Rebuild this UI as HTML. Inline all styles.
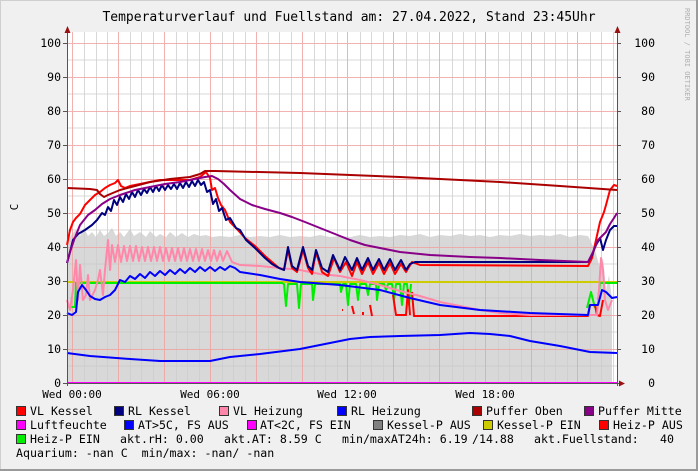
<!DOCTYPE html>
<html><head><meta charset="utf-8"><style>
body{margin:0;width:698px;height:471px;overflow:hidden;background:#f0f0f0;}
svg{display:block}
text{font-family:"DejaVu Sans Mono","Liberation Mono",monospace;white-space:pre;}
</style></head><body>
<svg width="698" height="471" viewBox="0 0 698 471" xmlns="http://www.w3.org/2000/svg">
<rect x="0" y="0" width="698" height="471" fill="#f0f0f0"/>
<rect x="0.5" y="0.5" width="696" height="469" fill="none" stroke="#cfcfcf"/>
<line x1="0" y1="470" x2="698" y2="470" stroke="#9a9a9a" stroke-width="2"/>
<line x1="697" y1="0" x2="697" y2="471" stroke="#9a9a9a" stroke-width="2"/>
<rect x="67" y="32" width="550" height="351" fill="#fff"/>
<path d="M67,383 L67,240 72,234 76,230 80,236 84,228 88,236 92,232 96,237 100,230 104,236 108,233 112,228 116,236 120,232 124,237 130,229 134,236 140,232 146,237 150,231 156,237 160,234 166,237 170,232 176,237 182,233 188,237 194,234 200,236 206,235 212,237 220,236 230,237 240,235 250,237 260,236 270,237 280,235 290,237 300,236 310,237 320,235 330,237 340,236 350,237 360,235 370,237 380,236 390,237 400,235 410,236 420,234 430,237 440,235 450,236 460,234 470,236 480,235 490,237 500,235 510,236 520,234 530,236 540,235 550,236 560,234 570,237 580,235 588,236 595,250 600,268 603,258 606,290 609,275 612,300 612,383 Z" fill="#d8d8d8"/>
<g stroke="#c8c8c8" stroke-width="1">
<path d="M67.5,366 H617 M67.5,332 H617 M67.5,298 H617 M67.5,264 H617 M67.5,230 H617 M67.5,196 H617 M67.5,162 H617 M67.5,128 H617 M67.5,94 H617 M67.5,60 H617" opacity="0.7"/>
</g>
<path stroke="#cccccc" stroke-width="1" opacity="0.75" d="M84.5,32V383M96.5,32V383M107.5,32V383M130.5,32V383M141.5,32V383M153.5,32V383M176.5,32V383M187.5,32V383M199.5,32V383M222.5,32V383M233.5,32V383M245.5,32V383M268.5,32V383M279.5,32V383M291.5,32V383M314.5,32V383M325.5,32V383M337.5,32V383M360.5,32V383M371.5,32V383M383.5,32V383M406.5,32V383M417.5,32V383M429.5,32V383M452.5,32V383M463.5,32V383M475.5,32V383M498.5,32V383M509.5,32V383M521.5,32V383M544.5,32V383M555.5,32V383M567.5,32V383M590.5,32V383M601.5,32V383M613.5,32V383"/>
<path stroke="#f0a0a0" stroke-width="1" opacity="0.8" d="M72.5,32V383M118.5,32V383M164.5,32V383M210.5,32V383M256.5,32V383M302.5,32V383M347.5,32V383M393.5,32V383M439.5,32V383M485.5,32V383M531.5,32V383M577.5,32V383 M67,349.5H617M67,315.5H617M67,281.5H617M67,247.5H617M67,213.5H617M67,179.5H617M67,145.5H617M67,111.5H617M67,77.5H617M67,43.5H617"/>
<g fill="none" stroke-width="2" stroke-linejoin="round">
<path stroke="#0000ff" d="M67,353 L90,356 130,359 160,361 190,361 210,361 230,357 260,354 300,349 320,345 350,339 370,337 400,336 440,335 470,333 490,334 510,336 530,341 560,346 590,352 617,353"/>
<path stroke="#cccc00" d="M67,282 L617,282"/>
<path stroke="#00ee00" d="M67,307 L75,307 76,283 282,283 284,284 286,306 288,284 297,284 299,308 301,284 312,284 313,300 315,284 340,284 341,292 343,284 346,284 348,305 350,284 356,284 358,300 360,284 366,284 368,295 370,284 376,284 377,300 379,284 384,284 386,290 388,284 392,284 394,300 396,284 400,284 402,305 404,284 407,284 409,305 411,284 M587,308 L589,300 591,292 593,300 595,308 M598,300 L600,283 617,283"/>
<path stroke="#ff0000" d="M342,310 L343,310 M352,306 L354,314 M363,312 L363,315 M370,305 L372,316 M393,295 L396,315 406,315 408,290 410,315 M412,292 L414,316 588,316 590,305 595,305 597,315 600,316 603,300"/>
<path stroke="#ff88aa" d="M67,300 L70,310 73,290 76,260 78,300 80,265 83,300 86,295 88,275 90,300 95,290 98,280 100,270 103,295 105,270 108,240 110,270 112,245 115,262 118,245 121,262 124,246 127,261 130,246 133,261 136,246 139,261 142,247 145,261 148,247 151,261 154,247 157,261 160,247 163,261 166,248 169,261 172,248 175,261 178,248 181,261 184,248 187,261 190,249 193,261 196,249 199,261 202,249 205,261 208,250 211,261 214,250 217,261 220,251 223,261 227,251 232,262 240,265 260,266 280,268 300,270 320,274 340,276 360,280 380,285 400,291 420,296 440,302 460,306 480,310 500,313 530,315 597,315 599,290 601,258 603,270 605,300 608,310 612,300"/>
<path stroke="#0000ff" d="M67,313 L72,315 76,312 78,292 82,285 86,290 90,296 95,299 100,300 105,297 110,295 115,290 120,280 125,282 130,276 135,279 140,274 145,278 150,272 155,276 160,271 165,275 170,270 175,274 180,269 185,273 190,268 195,272 200,267 205,271 210,267 215,271 220,267 225,270 230,266 235,268 240,272 260,275 280,279 300,282 340,285 380,290 410,298 440,305 480,310 530,313 588,315 590,305 598,305 602,290 606,292 612,298 617,297"/>
<path stroke="#ff0000" d="M67,245 L70,230 73,222 76,218 80,214 85,205 90,200 95,195 100,192 105,188 110,185 115,183 118,180 121,186 125,188 130,186 140,184 150,182 160,180 175,180 190,180 200,177 206,172 210,178 212,190 215,188 218,198 221,205 225,210 230,222 236,228 245,238 255,246 265,256 272,262 279,268 284,270 288,250 292,268 297,272 303,250 308,268 312,274 316,252 322,272 328,276 334,258 340,272 346,262 352,276 357,262 362,274 368,262 373,274 379,263 384,274 390,263 395,274 401,264 406,272 412,262 420,265 588,266 592,258 596,240 600,222 604,212 606,205 610,190 614,185 617,186"/>
<path stroke="#000080" d="M67,263 L70,252 73,240 78,234 85,230 92,225 97,220 102,213 105,215 108,207 111,211 114,200 117,205 120,197 123,202 126,194 129,199 132,192 135,197 138,190 141,195 144,189 147,193 150,187 153,192 156,186 159,191 162,185 165,190 168,185 171,189 174,184 177,189 180,183 183,188 186,182 189,187 192,181 195,186 198,180 201,185 204,182 207,192 210,190 213,204 216,199 219,211 222,208 226,220 230,218 236,228 240,230 246,240 255,248 265,258 272,264 279,268 284,270 288,247 292,266 297,270 303,247 308,266 312,270 316,250 322,268 328,272 333,255 340,270 345,257 352,270 357,258 362,270 368,258 373,270 379,259 384,270 390,259 395,270 401,260 406,270 410,264 415,262 588,262 592,255 596,245 600,238 603,250 606,240 610,230 614,226 617,226"/>
<path stroke="#880088" d="M67,263 L70,252 74,240 80,225 88,215 95,210 102,204 110,199 120,195 135,190 150,187 165,184 180,182 195,179 205,177 212,176 218,179 224,184 230,190 240,199 252,205 265,209 280,213 292,217 305,222 320,228 335,234 350,240 365,245 380,248 400,252 430,255 470,257 500,258 540,260 588,262 593,252 598,240 602,236 606,232 610,224 614,218 617,213"/>
<path stroke="#aa0000" d="M67,188 L90,189 97,190 100,194 104,197 108,195 120,190 135,186 150,182 170,179 190,177 200,174 205,171 215,171 300,173 400,177 500,182 560,186 617,190"/>
<path stroke="#ff00ff" d="M67,383 L617,383"/>
</g>
<path stroke="#555" stroke-width="1" fill="none" d="M67.5,32V386 M617.5,32V386 M64,383.5H620"/>
<path fill="#991111" d="M64.5,33 L67.5,26 70.5,33Z M614.5,33 L617.5,26 620.5,33Z M619,380.5 L625,383.5 619,386.5Z"/>
<path stroke="#555" stroke-width="1" d="M63,43.5H67M63,77.5H67M63,111.5H67M63,145.5H67M63,179.5H67M63,213.5H67M63,247.5H67M63,281.5H67M63,315.5H67M63,349.5H67M63,383.5H67M617,43.5H621M617,77.5H621M617,111.5H621M617,145.5H621M617,179.5H621M617,213.5H621M617,247.5H621M617,281.5H621M617,315.5H621M617,349.5H621"/>
<g font-size="11.5" fill="#000" text-anchor="end">
<text x="61" y="47">100</text><text x="61" y="81">90</text><text x="61" y="115">80</text><text x="61" y="149">70</text><text x="61" y="183">60</text><text x="61" y="217">50</text><text x="61" y="251">40</text><text x="61" y="285">30</text><text x="61" y="319">20</text><text x="61" y="353">10</text><text x="61" y="387">0</text>
<text x="655" y="47">100</text><text x="655" y="81">90</text><text x="655" y="115">80</text><text x="655" y="149">70</text><text x="655" y="183">60</text><text x="655" y="217">50</text><text x="655" y="251">40</text><text x="655" y="285">30</text><text x="655" y="319">20</text><text x="655" y="353">10</text><text x="655" y="387">0</text>
</g>
<g font-size="11" fill="#000" text-anchor="middle">
<text x="72" y="398">Wed 00:00</text><text x="210" y="398">Wed 06:00</text><text x="347" y="398">Wed 12:00</text><text x="485" y="398">Wed 18:00</text>
</g>
<text x="18" y="207" font-size="11" transform="rotate(-90 18 207)" text-anchor="middle">C</text>
<text x="349" y="21" font-size="13" text-anchor="middle">Temperaturverlauf und Fuellstand am: 27.04.2022, Stand 23:45Uhr</text>
<text x="685" y="8" font-size="7" fill="#b0b0b0" transform="rotate(90 685 8)">RRDTOOL / TOBI OETIKER</text>
<g stroke="#333" stroke-width="1">
<rect x="16.5" y="406.5" width="9" height="9" fill="#ff0000"/>
<rect x="114.5" y="406.5" width="9" height="9" fill="#000080"/>
<rect x="219.5" y="406.5" width="9" height="9" fill="#ff88aa"/>
<rect x="337.5" y="406.5" width="9" height="9" fill="#0000ff"/>
<rect x="472.5" y="406.5" width="9" height="9" fill="#aa0000"/>
<rect x="584.5" y="406.5" width="9" height="9" fill="#880088"/>
<rect x="16.5" y="420.5" width="9" height="9" fill="#ff00ff"/>
<rect x="124.5" y="420.5" width="9" height="9" fill="#0000ff"/>
<rect x="247.5" y="420.5" width="9" height="9" fill="#ff00ff"/>
<rect x="373.5" y="420.5" width="9" height="9" fill="#808080"/>
<rect x="483.5" y="420.5" width="9" height="9" fill="#cccc00"/>
<rect x="599.5" y="420.5" width="9" height="9" fill="#ff0000"/>
<rect x="16.5" y="434.5" width="9" height="9" fill="#00ee00"/>
</g>
<g font-size="11.6" fill="#000">
<text x="30" y="415">VL Kessel</text>
<text x="128" y="415">RL Kessel</text>
<text x="233" y="415">VL Heizung</text>
<text x="351" y="415">RL Heizung</text>
<text x="486" y="415">Puffer Oben</text>
<text x="598" y="415">Puffer Mitte</text>
<text x="30" y="429">Luftfeuchte</text>
<text x="138" y="429">AT&gt;5C, FS AUS</text>
<text x="260" y="429">AT&lt;2C, FS EIN</text>
<text x="387" y="429">Kessel-P AUS</text>
<text x="497" y="429">Kessel-P EIN</text>
<text x="613" y="429">Heiz-P AUS</text>
<text x="30" y="443">Heiz-P EIN</text>
<text x="120" y="443">akt.rH: 0.00</text>
<text x="224" y="443">akt.AT: 8.59 C</text>
<text x="342" y="443">min/maxAT24h: 6.19</text>
<text x="472" y="443">/14.88</text>
<text x="534" y="443">akt.Fuellstand:</text>
<text x="660" y="443">40</text>
<text x="16" y="457">Aquarium: -nan C  min/max: -nan/ -nan</text>
</g>
</svg>
</body></html>
